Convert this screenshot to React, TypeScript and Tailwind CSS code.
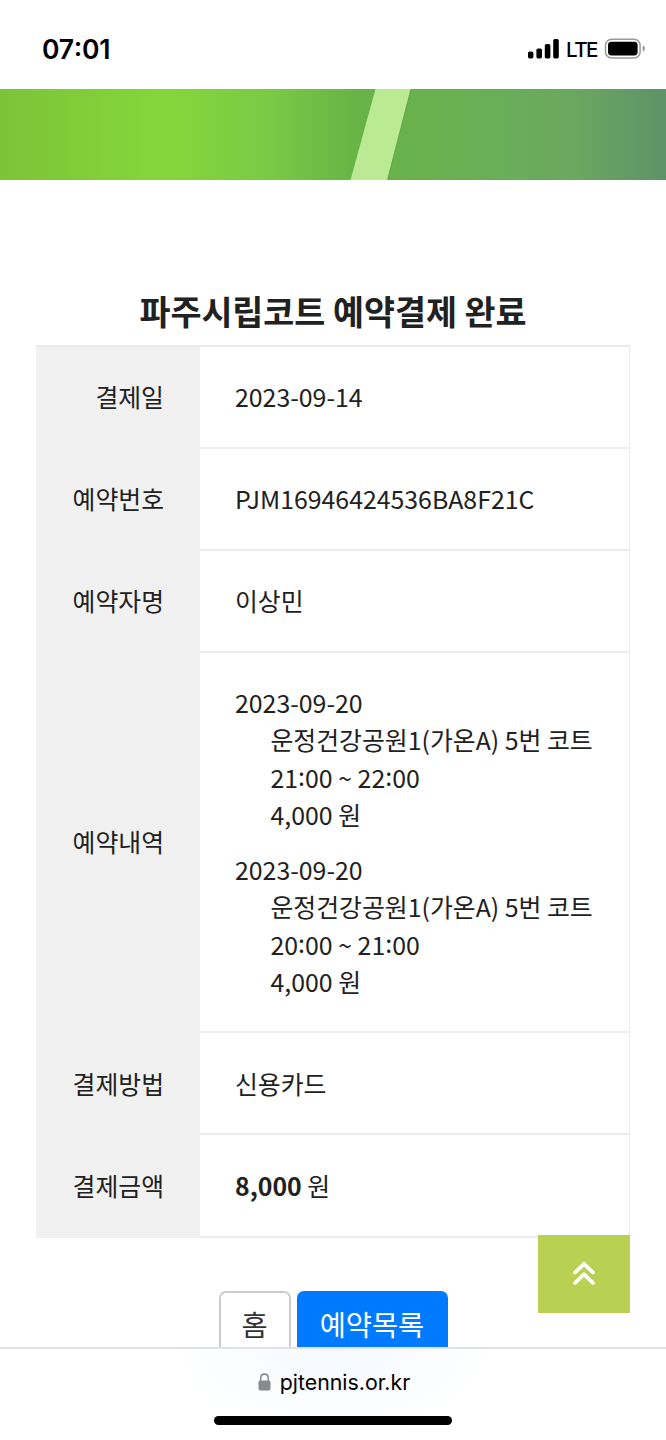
import React from "react";

interface Booking {
  date: string;
  court: string;
  start: string;
  end: string;
  price: string;
}

interface RowProps {
  label: string;
  className?: string;
  children: React.ReactNode;
}

const bookings: Booking[] = [
  {
    date: "2023-09-20",
    court: "운정건강공원1(가온A) 5번 코트",
    start: "21:00",
    end: "22:00",
    price: "4,000 원",
  },
  {
    date: "2023-09-20",
    court: "운정건강공원1(가온A) 5번 코트",
    start: "20:00",
    end: "21:00",
    price: "4,000 원",
  },
];

/* Clock time with the colon centred on the digits */
const Time = ({ value }: { value: string }) => {
  const [hours, minutes] = value.split(":");
  return (
    <span>
      {hours}
      <span className="align-[0.1em] leading-none">:</span>
      {minutes}
    </span>
  );
};

const StatusBar = () => (
  <header className="h-[89px] shrink-0 flex items-start justify-between pl-[42px] pr-[20px] pt-[33px] font-['Inter',sans-serif] text-black">
    <span className="text-[26.5px] leading-[30px] font-semibold tracking-[-0.2px]">
      <Time value="07:01" />
    </span>
    <div className="mt-[1px] flex items-center h-[30px]">
      <svg width="31" height="20" viewBox="0 0 31 20">
        <rect x="0" y="12.5" width="5.4" height="7" rx="1.7" />
        <rect x="8.4" y="9.5" width="5.6" height="10" rx="1.7" />
        <rect x="16.8" y="5" width="5.6" height="14.5" rx="1.7" />
        <rect x="25.2" y="0" width="5.6" height="19.5" rx="1.7" />
      </svg>
      <span className="ml-[7px] w-[32px] pt-[2px] text-[20.5px] leading-[28px] font-medium tracking-[-1.5px]">
        LTE
      </span>
      <svg className="ml-[6px]" width="42" height="22" viewBox="0 0 42 22">
        <rect x="1.5" y="1.3" width="34.6" height="18.6" rx="6" fill="none" stroke="#9a9a9a" strokeWidth="1.5" />
        <rect x="4" y="3.8" width="29.6" height="13.6" rx="3.4" />
        <path d="M38.7 7.6c1.7.7 2.3 1.8 2.3 3s-.6 2.3-2.3 3z" fill="#9a9a9a" />
      </svg>
    </div>
  </header>
);

/* Green court surface with a white line crossing it */
const Banner = () => (
  <svg className="block shrink-0" width="666" height="91" viewBox="0 0 666 91">
    <defs>
      <linearGradient id="court" x1="0" x2="1" y1="0" y2="0">
        <stop offset="0" stopColor="#7cc437" />
        <stop offset="0.25" stopColor="#85d63b" />
        <stop offset="0.4" stopColor="#7aca45" />
        <stop offset="0.54" stopColor="#67b345" />
        <stop offset="0.7" stopColor="#69b054" />
        <stop offset="0.86" stopColor="#6ba860" />
        <stop offset="1" stopColor="#5e9268" />
      </linearGradient>
    </defs>
    <rect width="666" height="91" fill="url(#court)" />
    <path d="M375.5 0H411L387.5 91H350.5z" fill="#bbea94" />
    <path d="M411 0L387.5 91" stroke="#5d9b42" strokeWidth="0.8" />
  </svg>
);

const Row = ({ label, className = "h-[102.2px]", children }: RowProps) => (
  <div className={`flex ${className}`}>
    <div className="w-[164px] shrink-0 flex items-center justify-end pr-[36px] pb-[2px] bg-[#f1f1f1]">
      {label}
    </div>
    <div className="flex-1 flex flex-col justify-center pl-[35px] border-b-2 border-[#ececec]">
      {children}
    </div>
  </div>
);

const App = () => {
  return (
    <div className="w-[666px] h-[1440px] flex flex-col overflow-hidden bg-white text-[#212121] font-['Noto_Sans_CJK_KR',sans-serif]">
      <StatusBar />
      <Banner />

      <main className="relative h-[1167px] shrink-0 overflow-hidden px-9 pt-[105px]">
        <h1 className="h-[60px] pt-[1px] text-center text-[33.7px] leading-[50px] font-bold">
          파주시립코트 예약결제 완료
        </h1>

        <section className="h-[892.5px] border-t-2 border-r border-[#ebebeb] text-[24.86px] leading-[37.3px]">
          <Row label="결제일" className="h-[101.6px]">
            2023-09-14
          </Row>
          <Row label="예약번호">PJM16946424536BA8F21C</Row>
          <Row label="예약자명">이상민</Row>
          <Row label="예약내역" className="h-[380.3px]">
            <div className="flex flex-col gap-[17.7px]">
              {bookings.map((booking, index) => (
                <div key={index}>
                  <p>{booking.date}</p>
                  <div className="pl-[35.5px] whitespace-nowrap">
                    <p>{booking.court}</p>
                    <p className="h-[37.3px]">
                      <Time value={booking.start} /> ~{" "}
                      <Time value={booking.end} />
                    </p>
                    <p>{booking.price}</p>
                  </div>
                </div>
              ))}
            </div>
          </Row>
          <Row label="결제방법">신용카드</Row>
          <Row label="결제금액">
            <p>
              <b className="font-bold">8,000</b> 원
            </p>
          </Row>
        </section>

        <div className="mt-[53.5px] flex justify-center gap-[6px] text-[28.4px] leading-[42px]">
          <button className="w-[72px] h-[72px] pb-[7px] rounded-[7px] border-2 border-[#cccccc] bg-white text-[#333333]">
            홈
          </button>
          <button className="w-[151px] h-[72px] pb-[7px] rounded-[7px] bg-[#007bff] text-white">
            예약목록
          </button>
        </div>

        {/* Floating scroll to top */}
        <button
          aria-label="top"
          className="absolute right-[36px] top-[1055px] w-[92px] h-[78px] pb-[2px] flex items-center justify-center bg-[#b9d052]"
        >
          <svg width="24" height="26" viewBox="0 0 24 26" fill="none" stroke="#ffffff" strokeWidth="3.8" strokeLinecap="round" strokeLinejoin="round">
            <path d="M3 12.5L12 3.8L21 12.5M3 23L12 14.3L21 23" />
          </svg>
        </button>
      </main>

      <footer className="flex-1 flex flex-col items-center border-t-2 border-[#e2e2e4] bg-[radial-gradient(ellipse_170px_90px_at_50%_0%,#f5f9fe,#ffffff)] font-['Inter',sans-serif] text-black">
        <div className="mt-[16px] h-[34px] pl-[2px] flex items-center">
          <svg width="13" height="18" viewBox="0 0 13 18">
            <path d="M2.7 8V5.2C2.7 2.6 4.2 1.1 6.5 1.1s3.8 1.5 3.8 4.1V8" fill="none" stroke="#8a8a8e" strokeWidth="1.6" />
            <rect x="0.5" y="7.5" width="12" height="10" rx="1.8" fill="#8a8a8e" />
          </svg>
          <span className="ml-[9px] text-[21.3px] leading-[30px]">pjtennis.or.kr</span>
        </div>
        <div className="mt-[17px] w-[238px] h-[9px] rounded-full bg-black"></div>
      </footer>
    </div>
  );
};

export default App;
